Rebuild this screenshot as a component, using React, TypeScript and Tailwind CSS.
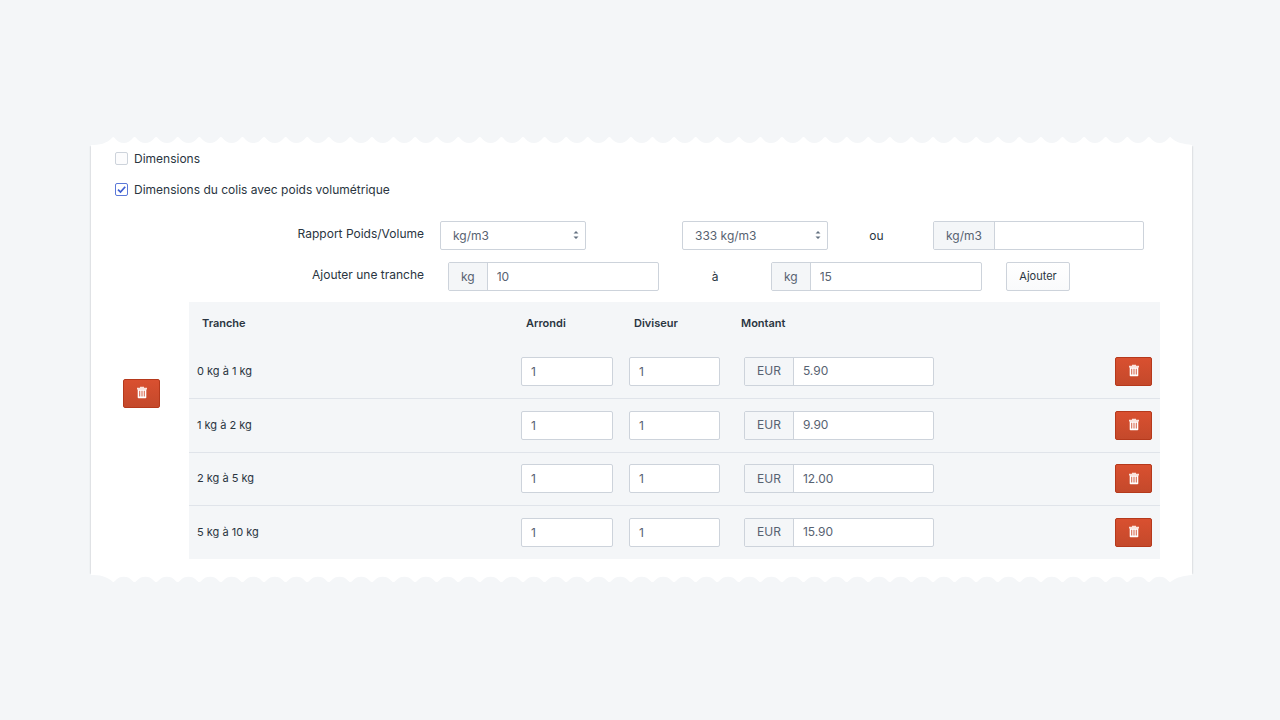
import { useState } from "react";

const rows = [
  { range: "0 kg à 1 kg", round: "1", divider: "1", amount: "5.90" },
  { range: "1 kg à 2 kg", round: "1", divider: "1", amount: "9.90" },
  { range: "2 kg à 5 kg", round: "1", divider: "1", amount: "12.00" },
  { range: "5 kg à 10 kg", round: "1", divider: "1", amount: "15.90" },
];

const scallops = "c 2.4 0 3.4 6 10.8 6 s 8.4 -6 10.8 -6 ".repeat(49);
const tornTop = `M0 10 V9 C8 9 16 8 22 1 ${scallops} C1086 7 1094 8 1102 9 V10 Z`;

function TornEdge({ flip = false }: { flip?: boolean }) {
  return (
    <svg
      aria-hidden="true"
      viewBox="0 0 1102 10"
      preserveAspectRatio="none"
      className={flip ? "block h-[9px] w-full -scale-y-100" : "block h-[10px] w-full"}
    >
      <path d={tornTop} fill="#fff" />
    </svg>
  );
}

function DeleteButton({ label }: { label: string }) {
  return (
    <button
      type="button"
      aria-label={label}
      className="inline-flex h-[29px] w-[37px] shrink-0 items-center justify-center rounded-[2px] border border-[#b5391c] bg-linear-to-b from-[#d95030] to-[#c4492b] align-middle"
    >
      <svg viewBox="0 0 12 14" className="h-[14px] w-[12px]" aria-hidden="true">
        <path d="M4 .8h4v1h3v1.600H1V1.800h3z" fill="#fbe3dc" />
        <path
          fillRule="evenodd"
          d="M1.700 3.200h8.600v8.300a.8.8 0 0 1-.8.8h-7a.8.8 0 0 1-.8-.8zM3.300 4.700v5.900h.9V4.700zM5.550 4.700v5.900h.9V4.700zM7.800 4.700v5.900h.9V4.700z"
          fill="#fff"
        />
      </svg>
    </button>
  );
}

function UnitInput({ unit, label, value, size }: { unit: string; label: string; value: string; size: string }) {
  return (
    <label className={`flex h-[29px] overflow-hidden rounded-[2px] border border-[#cdd3db] bg-white text-[12px] text-[#576271] ${size}`}>
      <span className="flex items-center border-r border-[#cdd3db] bg-[#f4f6f8] px-3">{unit}</span>
      <input aria-label={label} defaultValue={value} className="w-0 min-w-0 flex-1 px-[9px] outline-none" />
    </label>
  );
}

function UnitSelect({ id, value }: { id: string; value: string }) {
  return (
    <div className="relative w-[146px]">
      <select
        id={id}
        aria-label={value}
        className="block h-[29px] w-full appearance-none rounded-[2px] border border-[#cdd3db] bg-white px-3 text-[12px] text-[#576271]"
      >
        <option>{value}</option>
      </select>
      <svg viewBox="0 0 6 10" className="pointer-events-none absolute top-[9px] right-[7px] h-[10px] w-[6px]" aria-hidden="true">
        <path d="M.5 3.600 3 1l2.500 2.600zM.5 6.400 3 9l2.500-2.600z" fill="#637080" />
      </svg>
    </div>
  );
}

function CheckRow({ label, initial }: { label: string; initial: boolean }) {
  const [checked, setChecked] = useState(initial);
  return (
    <label className="flex items-center gap-[6px]">
      <span className="relative flex pb-px">
        <input
          type="checkbox"
          checked={checked}
          onChange={() => setChecked(!checked)}
          className="size-[13px] appearance-none rounded-[2px] border border-[#cdd3db] bg-[#fcfcfd] checked:border-[#5b78d8] checked:bg-white"
        />
        {checked && (
          <svg viewBox="0 0 13 13" className="pointer-events-none absolute top-0 left-0 size-[13px]" aria-hidden="true">
            <path d="M3 6.600 5.500 9l4.700-5.300" fill="none" stroke="#3f5fd0" strokeWidth="1.700" />
          </svg>
        )}
      </span>
      {label}
    </label>
  );
}

const fieldClass =
  "block h-[29px] w-full rounded-[2px] border border-[#cdd3db] bg-white px-[9px] text-[12px] text-[#576271] outline-none";

export default function App() {
  return (
    <main className="flex min-h-screen items-start justify-center bg-[#f4f6f8] pt-[136px] pr-[88px] pb-12 pl-[91px] font-['Inter','Liberation_Sans',sans-serif] text-[12px] text-[#2a3541]">
      <section className="w-full max-w-[1102px]">
        <TornEdge />
        <div className="bg-white px-6 pt-[4px] shadow-[0_0_2px_rgba(40,50,60,0.3)] [clip-path:inset(0_-4px)]">
          <div className="flex flex-col gap-[13px]">
            <CheckRow label="Dimensions" initial={false} />
            <CheckRow label="Dimensions du colis avec poids volumétrique" initial={true} />
          </div>
          <div className="flex items-center gap-[29px] px-2 pt-[22px] pb-[9px]">
            <DeleteButton label="Supprimer le rapport" />
            <div className="min-w-0 flex-1 pb-[6px]">
              <div className="flex items-center">
                <label htmlFor="ratio" className="w-[235px] pb-1 text-right">Rapport Poids/Volume</label>
                <div className="flex items-center pl-4">
                  <UnitSelect id="ratio" value="kg/m3" />
                  <div className="pl-24">
                    <UnitSelect id="density" value="333 kg/m3" />
                  </div>
                  <span className="w-[105px] pr-2 text-center">ou</span>
                  <UnitInput unit="kg/m3" label="Autre rapport" value="" size="w-[211px]" />
                </div>
              </div>
              <div className="flex items-center pt-3">
                <span className="w-[235px] pb-1 text-right">Ajouter une tranche</span>
                <div className="flex items-center pl-6">
                  <UnitInput unit="kg" label="De" value="10" size="w-[211px]" />
                  <span className="w-28 text-center">à</span>
                  <UnitInput unit="kg" label="À" value="15" size="w-[211px]" />
                  <button
                    type="button"
                    className="ml-6 h-[29px] w-16 rounded-[2px] border border-[#cdd3db] bg-linear-to-b from-white to-[#f9fafb] text-[11px]"
                  >
                    Ajouter
                  </button>
                </div>
              </div>
              <table className="mt-[11px] w-full table-fixed border-collapse bg-[#f4f6f8] text-left">
                <thead>
                  <tr className="h-[43px] text-[11px]">
                    <th className="px-[13px] font-semibold">Tranche</th>
                    <th className="w-[108px] px-[13px] font-semibold">Arrondi</th>
                    <th className="w-[107px] px-[13px] font-semibold">Diviseur</th>
                    <th className="w-[300px] px-[13px] font-semibold">Montant</th>
                    <th className="w-[132px]" aria-label="Actions" />
                  </tr>
                </thead>
                <tbody>
                  {rows.map((row) => (
                    <tr key={row.range} className="border-b border-[#e0e4ea] text-[11px] last:border-b-0 odd:h-[53px] even:h-[54px]">
                      <td className="px-2">{row.range}</td>
                      <td className="px-2">
                        <input aria-label={`Arrondi ${row.range}`} defaultValue={row.round} className={fieldClass} />
                      </td>
                      <td className="px-2">
                        <input aria-label={`Diviseur ${row.range}`} defaultValue={row.divider} className={fieldClass} />
                      </td>
                      <td className="px-4">
                        <UnitInput unit="EUR" label={`Montant ${row.range}`} value={row.amount} size="w-[190px]" />
                      </td>
                      <td className="px-2 text-right">
                        <DeleteButton label={`Supprimer ${row.range}`} />
                      </td>
                    </tr>
                  ))}
                </tbody>
              </table>
            </div>
          </div>
        </div>
        <TornEdge flip />
      </section>
    </main>
  );
}
